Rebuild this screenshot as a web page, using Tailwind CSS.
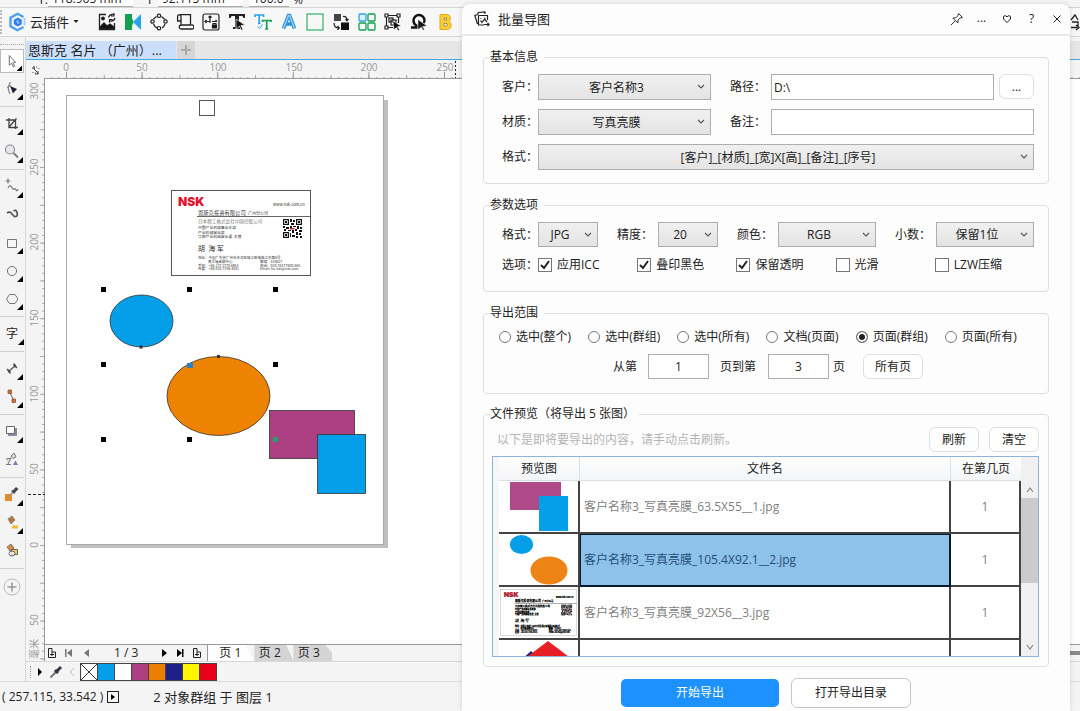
<!DOCTYPE html>
<html lang="zh-CN">
<head>
<meta charset="utf-8">
<title>批量导图</title>
<script src="https://cdn.jsdelivr.net/npm/@tailwindcss/browser@4"></script>
</head>
<body class="h-screen overflow-hidden bg-[#f4f4f4] font-['Open_Sans','Noto_Sans_CJK_SC',sans-serif] text-xs text-[#222]">

<svg class="hidden" aria-hidden="true">
  <symbol id="chev" viewBox="0 0 8 6"><path d="M1 1l3 3 3-3" fill="none" stroke="#555" stroke-width="1.1"/></symbol>
  <symbol id="card" viewBox="0 0 140 86">
    <rect x=".5" y=".5" width="139" height="85" fill="#fff" stroke="#555"/>
    <text x="7" y="15.500" font-size="12" font-weight="900" fill="#e2142d" font-family="Inter, sans-serif">NSK</text>
    <g fill="#333" font-family="'Noto Sans CJK SC', sans-serif">
      <text x="102" y="16" font-size="4">www.nsk.com.cn</text>
      <text x="27" y="24.500" font-size="5.300">恩斯克投资有限公司</text>
      <text x="77" y="24.500" font-size="4">广州分公司</text>
      <text x="27" y="33" font-size="4.600" fill="#777">日本精工株式会社中国控股公司</text>
      <text x="27" y="39" font-size="3.800">中国产业机械事业本部</text>
      <text x="27" y="43.500" font-size="3.800">产业机械营业部</text>
      <text x="27" y="48" font-size="3.800">华南产业机械营业课&#160; 主管</text>
      <text x="27" y="61" font-size="7">胡&#160; 海 军</text>
      <text x="27" y="69" font-size="3.500">地址：中国广东省广州市天河区珠江新城珠江东路6号</text>
      <text x="37" y="72.800" font-size="3.500">周大福金融中心</text>
      <text x="27" y="76.500" font-size="3.500">手机：+86-137 2770 6953</text>
      <text x="27" y="80.300" font-size="3.500">传真：+86-020-3786 4501</text>
      <text x="89" y="72.800" font-size="3.500">邮编：510627</text>
      <text x="89" y="76.500" font-size="3.500">电话：020-38177800-865</text>
      <text x="89" y="80.300" font-size="3.500">Email: hu-hai@nsk.com</text>
    </g>
    <path d="M26 26.500h114" stroke="#555" stroke-width=".9"/>
    <g transform="translate(112 29)" fill="#111">
      <path d="M0 0h6v6H0zM13 0h6v6h-6zM0 13h6v6H0z"/>
      <path d="M1.200 1.200h3.600v3.600H1.200zM14.200 1.200h3.600v3.600h-3.600zM1.200 14.200h3.600v3.600H1.200z" fill="#fff"/>
      <path d="M2 2h2v2H2zM15 2h2v2h-2zM2 15h2v2H2zM7 0h2v3H7zM10 1h2v2h-2zM8 4h3v2H8zM0 7h2v2H0zM3 8h3v2H3zM7 7h2v3H7zM10 7h3v1h-3zM14 7h2v3h-2zM17 8h2v2h-2zM1 10h2v2H1zM5 11h3v1H5zM9 11h2v3H9zM12 10h2v2h-2zM16 11h3v2h-3zM7 14h1v4H7zM9 16h3v2H9zM13 13h2v3h-2zM16 14h2v2h-2zM13 17h2v2h-2zM17 17h2v2h-2z"/>
      <path d="M7.500 9h4v1.500h-4z" fill="#d22"/>
    </g>
  </symbol>
</svg>

<div class="flex h-full flex-col">
  <!-- property bar, scrolled almost out of view -->
  <div class="flex h-2 shrink-0 items-end overflow-hidden border-b border-[#d4d4d4] bg-[#f5f5f5] pl-[38px] leading-[14px]">
    <span class="w-2">Y:</span>
    <span class="ml-0.5 w-[85px] border-b border-[#aaa] bg-white pl-1">118.965 mm</span>
    <span class="ml-[15px] w-2.5">I</span>
    <span class="w-[85px] border-b border-[#aaa] bg-white pl-1">92.115 mm</span>
    <span class="ml-1.5 w-10 border-b border-[#aaa] bg-white pl-1">100.0</span>
    <span class="ml-1">%</span>
  </div>

  <!-- plugin toolbar -->
  <div class="flex h-[29px] shrink-0 items-center border-b border-[#d8d8d8] bg-[#f7f7f7]">
    <div class="h-6 border-l-2 border-dotted border-[#bbb]"></div>
    <button class="ml-1.5 flex items-center text-[13px] leading-5">
      <svg class="size-5" viewBox="0 0 20 20"><path d="M15.500 5L9.500 1.800 2.500 5.700v8.600l7 3.900 6-3.200" fill="none" stroke="#4aa0f5" stroke-width="2.400"/><path d="M16.500 6v7.500" stroke="#9fd0ff" stroke-width="2"/><path d="M9.800 5.500l4 2.300v4.500l-4 2.300-4-2.300V7.800z" fill="#2f7fe8"/><path d="M9.800 8v4M8 9l3.600 2" stroke="#9fd0ff"/></svg>
      <span class="ml-0.5">云插件</span>
      <svg class="ml-1 size-2" viewBox="0 0 8 8"><path d="M.5 2h5L3 5z" fill="#222"/></svg>
    </button>
    <div class="ml-[17px] flex gap-2">
      <button aria-label="图片"><svg class="size-[18px]" viewBox="0 0 18 18" fill="none" stroke="#222" stroke-width="1.300"><path d="M8 1.500H1.500v15h15V10"/><path d="M2 16v-2l4-4 3 3 3-2 4 3v2z" fill="#111"/><circle cx="5" cy="5.500" r="1.300" fill="#111"/><path d="M10.500 4.500q1-3.500 5-3M16 0v3h-3M17 5q-1 3.500-5 3M11.500 9.500v-3h3" stroke-width="1.200"/></svg></button>
      <button aria-label="镜像"><svg class="size-[18px]" viewBox="0 0 18 18"><path d="M1 1h7v16H1z" fill="#12a150"/><path d="M8 5v8l1.500-4z" fill="#12a150"/><path d="M17 1v16L9 9z" fill="#2aa3ef"/></svg></button>
      <button aria-label="节点"><svg class="size-[18px]" viewBox="0 0 18 18" fill="none" stroke="#222" stroke-width="1.200"><path d="M6.500 3.500L3.500 6M11.500 3.500L15 6.500M3.500 11q1 3 3.500 4M15 11q-1 3-3 4"/><circle cx="9" cy="2.800" r="1.700"/><circle cx="2.500" cy="8.500" r="1.700"/><circle cx="15.500" cy="8.500" r="1.700"/><circle cx="9" cy="15.200" r="1.700"/></svg></button>
      <button aria-label="卷轴"><svg class="size-[18px]" viewBox="0 0 18 18" fill="none" stroke="#222" stroke-width="1.300"><path d="M5 12V3.500a1.700 1.700 0 00-3.400 0V8H5M3.500 1.700h11V12M5 12h10a2 2 0 011.500 4H5.500a2 2 0 01-.5-4"/></svg></button>
      <button aria-label="锁定"><svg class="size-[18px]" viewBox="0 0 18 18" fill="none" stroke="#222" stroke-width="1.200"><rect x="1" y="1" width="16" height="16" rx="2"/><path d="M8 3v7M6.500 4.500L8 3l1.500 1.500M3 8.500h5M4.500 7L3 8.500 4.500 10M10 8.500h5M13.500 7L15 8.500"/><path d="M10.500 12h4v3h-4z" fill="#111"/><path d="M11 12v-1.500h3V12"/></svg></button>
      <button aria-label="文字选择"><svg class="size-[18px]" viewBox="0 0 18 18"><path d="M1 1h16v4h-1.500q0-2-2-2H11v11h2v2H5v-2h2V3H4.500q-2 0-2 2H1z" fill="#222"/><path d="M8 6l9 6-4 .5 2 4-1.500.8-2-4L8 16z" fill="#111" stroke="#f7f7f7" stroke-width=".7"/></svg></button>
      <button aria-label="文字转换"><svg class="size-[18px]" viewBox="0 0 18 18" fill="none" stroke-width="1.700"><path d="M1 4V2h8.500v2M5.200 2v8.500M4 10.500h2.500" stroke="#2aa3ef"/><path d="M8.500 9V7.500H17V9M12.700 7.500V16M11.200 16h3" stroke="#12a150"/><path d="M3.500 13.500l2 2 3-4" stroke="#2aa3ef" stroke-width="1"/></svg></button>
      <button aria-label="字体"><svg class="size-[18px]" viewBox="0 0 18 18"><path d="M3.500 15.500L8.500 2.500h1l5 13M6 11h6" fill="none" stroke="#2d8fd8" stroke-width="3.600"/><path d="M3.500 15.500L8.500 2.500h1l5 13" fill="none" stroke="#8dd0f8" stroke-width="1.500"/></svg></button>
      <button aria-label="矩形"><svg class="size-[18px]" viewBox="0 0 18 18"><rect x="1" y="1" width="16" height="16" fill="none" stroke="#2db26a" stroke-width="1.200"/></svg></button>
      <button aria-label="替换"><svg class="size-[18px]" viewBox="0 0 18 18"><path d="M2 1h7v7H2z" fill="#444"/><path d="M9 9.500h8V17H9z" fill="#111"/><path d="M11 3.500q4-.5 4 4M13.500 6L15 7.800 16.500 6M2 10q0 5 5 5M5.500 13l1.800 2-1.800 1.700" fill="none" stroke="#222" stroke-width="1.200"/></svg></button>
      <button aria-label="排列"><svg class="size-[18px]" viewBox="0 0 18 18" fill="none" stroke-width="1.300"><rect x="1" y="1" width="7" height="7" rx="1" stroke="#2aa3ef" fill="#dff1ff"/><g stroke="#12a150"><rect x="10" y="1" width="7" height="7" rx="1"/><rect x="1" y="10" width="7" height="7" rx="1"/><rect x="10" y="10" width="7" height="7" rx="1"/></g></svg></button>
      <button aria-label="群组"><svg class="size-[18px]" viewBox="0 0 18 18" fill="none" stroke="#222" stroke-width="1.200"><path d="M3 2.500h11M3 14.500h6M2.500 3v11M14.500 3v7"/><path d="M1 1h3v3H1zM13 1h3v3h-3zM1 13h3v3H1z" fill="#f7f7f7"/><rect x="5" y="5" width="4" height="4"/><rect x="7" y="7" width="5" height="5"/><path d="M9 8l8 5-3.500.8 2 3-1.200.8-2-3L10 17z" fill="#111" stroke="#f7f7f7" stroke-width=".5"/></svg></button>
      <button aria-label="曲线选择"><svg class="size-[18px]" viewBox="0 0 18 18"><path d="M1 14.500h5.500v-2Q3.500 11 3.500 7.500A5.500 5.500 0 0114.500 7.500Q14.500 9 13.500 10" fill="none" stroke="#111" stroke-width="2.400"/><path d="M8 6.500l9 6.500-4.500.5 2 3-1.200.7-2-3L8 16.500z" fill="#111" stroke="#f7f7f7" stroke-width=".5"/></svg></button>
      <button aria-label="加粗"><svg class="size-[18px]" viewBox="0 0 18 18"><path d="M4 1.500h6q4.500 0 4.500 3.800 0 2-1.600 3 2.300 1 2.300 3.900 0 4.300-5 4.300H4z" fill="#fbcf30" stroke="#e0a81c"/><path d="M8 5h2.500v2H8zM8 10.500h3v2.500H8z" fill="#f7f7f7" stroke="#8a7a5a" stroke-width=".8"/></svg></button>
    </div>
    <button class="ml-auto" aria-label="导出"><svg class="size-[18px]" viewBox="0 0 18 18"><path d="M9 7l4-5 3 5M10 9h6v6M9 14.500h6M14 12l3 2.500-3 2.500" fill="none" stroke="#222" stroke-width="1.300"/></svg></button>
  </div>

  <div class="flex min-h-0 flex-1">
    <!-- toolbox -->
    <div class="flex w-[26px] shrink-0 flex-col items-start border-r border-[#d8d8d8] pt-[7px]">
      <div class="mb-0.5 w-6 border-t border-dotted border-[#aaa]"></div>
      <button aria-label="选择" class="grid h-7 w-6 shrink-0 place-items-center"><svg class="h-6 w-6 border border-[#bbb] bg-white" viewBox="0 0 24 24"><path d="M9 6v10.500l2.500-2 2 4 1.500-.8-2-3.700 3-.5z" fill="#fff" stroke="#666"/><path d="M23 17v6h-6z" fill="#000"/></svg></button>
      <button aria-label="形状" class="grid h-7 w-6 shrink-0 place-items-center"><svg class="h-6 w-6" viewBox="0 0 24 24"><path d="M10.500 5q-4 6-.5 12M7 10.500l4-2" fill="none" stroke="#888" stroke-width="1.300"/><path d="M10 9l7 3-4 4.500z" fill="#223"/><path d="M23 17v6h-6z" fill="#000"/></svg></button>
      <hr class="my-[3px] w-6 border-[#d0d0d0]">
      <button aria-label="裁剪" class="grid h-7 w-6 shrink-0 place-items-center"><svg class="h-6 w-6" viewBox="0 0 24 24"><path d="M6 8h9.500v9M9 6v9.500h9M8.500 15.500l8-9" fill="none" stroke="#444" stroke-width="1.300"/><path d="M23 17v6h-6z" fill="#000"/></svg></button>
      <button aria-label="缩放" class="grid h-7 w-6 shrink-0 place-items-center"><svg class="h-6 w-6" viewBox="0 0 24 24"><circle cx="10" cy="9.500" r="4.500" fill="#e4e8ec" stroke="#888" stroke-width="1.100"/><path d="M13.500 13l4.500 4.500" stroke="#777" stroke-width="1.800"/><path d="M23 17v6h-6z" fill="#000"/></svg></button>
      <hr class="my-[3px] w-6 border-[#d0d0d0]">
      <button aria-label="手绘" class="grid h-7 w-6 shrink-0 place-items-center"><svg class="h-6 w-6" viewBox="0 0 24 24"><path d="M8 3.500v5M5.500 6h5M8 13q2-4 3.500-1t2.500 2 2 1 2-1" fill="none" stroke="#777" stroke-width="1.200"/><path d="M23 17v6h-6z" fill="#000"/></svg></button>
      <button aria-label="艺术笔" class="grid h-7 w-6 shrink-0 place-items-center"><svg class="h-6 w-6" viewBox="0 0 24 24"><path d="M7 10q3-2 5 1t4 2.500 1-4-3.500-1.500" fill="none" stroke="#555" stroke-width="1.700"/></svg></button>
      <button aria-label="矩形工具" class="grid h-7 w-6 shrink-0 place-items-center"><svg class="h-6 w-6" viewBox="0 0 24 24"><path d="M7.500 8.500h9v8h-9z" fill="#f4f6f8" stroke="#777"/><path d="M23 17v6h-6z" fill="#000"/></svg></button>
      <button aria-label="椭圆工具" class="grid h-7 w-6 shrink-0 place-items-center"><svg class="h-6 w-6" viewBox="0 0 24 24"><circle cx="12" cy="12" r="4.600" fill="#f0f2f4" stroke="#777"/><path d="M23 17v6h-6z" fill="#000"/></svg></button>
      <button aria-label="多边形" class="grid h-7 w-6 shrink-0 place-items-center"><svg class="h-6 w-6" viewBox="0 0 24 24"><path d="M6.500 12l3-4.500h5.500l3 4.500-3 4.500H9.500z" fill="#f0f2f4" stroke="#777"/><path d="M23 17v6h-6z" fill="#000"/></svg></button>
      <hr class="my-[3px] w-6 border-[#d0d0d0]">
      <button class="flex h-7 w-6 shrink-0 items-center justify-end text-xs leading-none" aria-label="文本">字<svg class="mt-4 size-1.5" viewBox="0 0 6 6"><path d="M6 0v6H0z"/></svg></button>
      <hr class="my-[3px] w-6 border-[#d0d0d0]">
      <button aria-label="度量" class="grid h-7 w-6 shrink-0 place-items-center"><svg class="h-6 w-6" viewBox="0 0 24 24"><path d="M8.500 14.500l7-6M7 12l3.500 4.500M13.500 6.500l3.500 4.500" stroke="#555" stroke-width="1.300"/><path d="M8 15.500l.5-3.500 2.500 3zM16 7.500l-.5 3.500-2.500-3z" fill="#444"/><path d="M23 17v6h-6z" fill="#000"/></svg></button>
      <button aria-label="连接器" class="grid h-7 w-6 shrink-0 place-items-center"><svg class="h-6 w-6" viewBox="0 0 24 24"><path d="M9.500 7l4 8" stroke="#666"/><path d="M8 5h3.500v3.500H8zM12 14h3.500v3.500H12z" fill="#d0733a" stroke="#8a4a22" stroke-width=".7"/><path d="M23 17v6h-6z" fill="#000"/></svg></button>
      <hr class="my-[3px] w-6 border-[#d0d0d0]">
      <button aria-label="阴影" class="grid h-7 w-6 shrink-0 place-items-center"><svg class="h-6 w-6" viewBox="0 0 24 24"><path d="M8 8h9v8H8z" fill="#8a8aa8"/><path d="M6.500 6.500h8v7h-8z" fill="#fff" stroke="#666"/><path d="M23 17v6h-6z" fill="#000"/></svg></button>
      <button aria-label="透明度" class="grid h-7 w-6 shrink-0 place-items-center"><svg class="h-6 w-6" viewBox="0 0 24 24"><path d="M11 8l3-3 2 4-3 1.500zM6 11l5-1-3 6M6 16.500h5" fill="#ddd" stroke="#777"/><path d="M13 17l2.500-4.500L18 17z" fill="#7678b8"/></svg></button>
      <hr class="my-[3px] w-6 border-[#d0d0d0]">
      <button aria-label="滴管" class="grid h-7 w-6 shrink-0 place-items-center"><svg class="h-6 w-6" viewBox="0 0 24 24"><path d="M5 11h7v7H5z" fill="#ef8a1b"/><path d="M8 15l5-6" stroke="#999" stroke-width="1.800"/><path d="M11 8l2-1 3-3 2.500 2-3 3-1 2z" fill="#445"/><path d="M23 17v6h-6z" fill="#000"/></svg></button>
      <button aria-label="填充" class="grid h-7 w-6 shrink-0 place-items-center"><svg class="h-6 w-6" viewBox="0 0 24 24"><path d="M8 8l4-3 3 4-4 4z" fill="#b9773a" stroke="#888"/><path d="M11.500 17.500l2-4 2 1.500 2-1 .5 3.500z" fill="#f7b52a"/><path d="M23 17v6h-6z" fill="#000"/></svg></button>
      <button aria-label="智能填充" class="grid h-7 w-6 shrink-0 place-items-center"><svg class="h-6 w-6" viewBox="0 0 24 24"><path d="M7 8l4-3 3 4-4 3z" fill="#d98a3a" stroke="#777"/><path d="M11.500 10.500h6v5h-6z" fill="#f5c66a" stroke="#666"/><ellipse cx="12" cy="14.500" rx="3" ry="2.500" fill="#fff" fill-opacity=".7" stroke="#666"/></svg></button>
      <hr class="my-[3px] w-6 border-[#d0d0d0]">
      <button aria-label="添加工具" class="mt-px grid h-7 w-6 shrink-0 place-items-center"><svg class="h-5 w-5" viewBox="0 0 20 20"><circle cx="10" cy="10" r="8" fill="none" stroke="#bbb"/><path d="M10 5.500v9M5.500 10h9" stroke="#999" stroke-width="1.600"/></svg></button>
    </div>

    <div class="flex min-w-0 flex-1 flex-col">
      <!-- document tabs -->
      <div class="mt-1 flex h-[19px] shrink-0 gap-px border-b border-[#3fa9e0] bg-[#e6e6e6]">
        <button class="w-[150px] bg-[#cbdffb] pl-0.5 text-left text-[13px] leading-[17px] whitespace-nowrap">恩斯克 名片 （广州）...</button>
        <button class="grid w-[18px] place-items-center bg-[#d6d6d6]" aria-label="新建"><svg class="size-3" viewBox="0 0 12 12"><path d="M6 1v10M1 6h10" stroke="#aaa" stroke-width="2"/></svg></button>
      </div>
      <!-- horizontal ruler, 50 units = 75.6 px -->
      <svg class="h-[19px] w-full shrink-0" font-size="10" fill="#999">
        <defs>
          <pattern id="hs" width="7.560" height="3" patternUnits="userSpaceOnUse" x="40" y="16"><path d="M.5 1v2" stroke="#aaa"/></pattern>
          <pattern id="hm" width="37.800" height="5" patternUnits="userSpaceOnUse" x="40" y="14"><path d="M.5 1v4" stroke="#aaa"/></pattern>
          <pattern id="hl" width="75.600" height="7" patternUnits="userSpaceOnUse" x="40" y="12"><path d="M.5 0v7" stroke="#999"/></pattern>
        </defs>
        <rect x="19" y="16" width="100%" height="2" fill="url(#hs)"/><rect x="19" y="14" width="100%" height="4" fill="url(#hm)"/><rect x="19" y="12" width="100%" height="6" fill="url(#hl)"/>
        <path d="M18 18.500h2000" stroke="#999"/>
        <g text-anchor="middle"><text x="40" y="11">0</text><text x="116" y="11">50</text><text x="192" y="11">100</text><text x="268" y="11">150</text><text x="343" y="11">200</text><text x="419" y="11">250</text></g>
        <path d="M429.500 1v17" stroke="#222" stroke-dasharray="2 2"/>
        <path d="M6 8h3M8 6v3M8 9l5 5M13 8v1M7 12v1M12 11v3H9M10 7h1M9 13h1" stroke="#444" fill="none"/>
      </svg>
      <div class="flex min-h-0 flex-1">
        <!-- vertical ruler -->
        <svg class="h-full w-[19px] shrink-0" font-size="10" fill="#999">
          <defs>
            <pattern id="vs" width="3" height="7.560" patternUnits="userSpaceOnUse" x="15" y="12.400"><path d="M1 .5h2" stroke="#aaa"/></pattern>
            <pattern id="vm" width="5" height="37.800" patternUnits="userSpaceOnUse" x="13" y="12.400"><path d="M1 .5h4" stroke="#aaa"/></pattern>
          </defs>
          <rect x="15" width="3" height="100%" fill="url(#vs)"/><rect x="13" width="5" height="100%" fill="url(#vm)"/>
          <path d="M18.500 0v2000" stroke="#999"/>
          <g text-anchor="middle">
            <text transform="translate(12 12) rotate(-90)">300</text><text transform="translate(12 88) rotate(-90)">250</text><text transform="translate(12 163) rotate(-90)">200</text><text transform="translate(12 239) rotate(-90)">150</text><text transform="translate(12 315) rotate(-90)">100</text><text transform="translate(12 390) rotate(-90)">50</text><text transform="translate(12 466) rotate(-90)">0</text><text transform="translate(12 541) rotate(-90)">50</text><text transform="translate(12 570) rotate(-90)" font-family="'Noto Sans CJK SC', sans-serif">毫米</text>
          </g>
          <path d="M2 415.500h17" stroke="#222" stroke-dasharray="3 2"/>
        </svg>
        <div class="flex min-w-0 flex-1 flex-col">
          <!-- drawing canvas -->
          <svg class="min-h-0 w-full flex-1 bg-white">
            <g transform="translate(-45 -79)" stroke-width="1">
              <path d="M71 545h313V100h4v448H71z" fill="#bfbfbf"/>
              <rect x="66.500" y="95.500" width="317" height="449" fill="#fff" stroke="#aaa"/>
              <rect x="199.500" y="100.500" width="15" height="15" fill="#fff" stroke="#555"/>
              <use href="#card" x="171" y="190" width="140" height="86"/>
              <g stroke="#333" stroke-width=".8">
                <ellipse cx="141.500" cy="321" rx="31.500" ry="26" fill="#049fe8"/>
                <ellipse cx="218.500" cy="396" rx="51.500" ry="39.500" fill="#ee8302"/>
                <rect x="269.500" y="410.500" width="85" height="48" fill="#ad4082"/>
                <rect x="317.500" y="434.500" width="48" height="59" fill="#049fe8"/>
              </g>
              <path d="M101 287h5v5h-5zM187 287h5v5h-5zM273 287h5v5h-5zM101 362h5v5h-5zM273 362h5v5h-5zM101 437h5v5h-5zM187 437h5v5h-5z" fill="#000"/>
              <path d="M187 363h6v5h-6z" fill="#2d7fc8"/><path d="M273 437h5v5h-5z" fill="#26a06a"/>
              <path d="M139.500 345.500h3v3h-3zM217 355h3v3h-3z" fill="#333"/>
            </g>
          </svg>
          <!-- page navigator -->
          <div class="flex h-[17px] shrink-0 items-center border-t border-[#999] text-xs leading-4">
            <button class="ml-px" aria-label="前插页"><svg class="size-3" viewBox="0 0 12 12"><path d="M6 1.500H2.500v9h7V5M6 1.500V5h3.500M6 5v4M4 7.500h4" fill="none" stroke="#222"/></svg></button>
            <button class="ml-[7px]" aria-label="首页"><svg class="size-2" viewBox="0 0 8 8" fill="#777"><path d="M0 0h1.500v8H0zM7 0v8L2 4z"/></svg></button>
            <button class="ml-2.5" aria-label="上一页"><svg class="size-2" viewBox="0 0 8 8" fill="#777"><path d="M6 0v8L1 4z"/></svg></button>
            <span class="ml-[23px]">1 / 3</span>
            <button class="ml-[22px]" aria-label="下一页"><svg class="size-2" viewBox="0 0 8 8"><path d="M2 0v8l5-4z"/></svg></button>
            <button class="ml-2" aria-label="末页"><svg class="size-2" viewBox="0 0 8 8"><path d="M1 0v8l5-4zM6 0h1.500v8H6z"/></svg></button>
            <button class="ml-[7px]" aria-label="后插页"><svg class="size-3" viewBox="0 0 12 12"><path d="M6 1.500H2.500v9h7V5M6 1.500V5h3.500M6 5v4M4 7.500h4" fill="none" stroke="#222"/></svg></button>
            <div class="ml-1 flex h-4 border-l border-[#999]">
              <button class="w-[46px] bg-white pr-0.5 [clip-path:polygon(0_0,80%_0,100%_100%,0_100%)]">页 1</button>
              <button class="w-[39px] bg-[#d4d4d4] pr-2 [clip-path:polygon(0_0,82%_0,100%_100%,0_100%)]">页 2</button>
              <button class="w-[39px] bg-[#d4d4d4] pr-2 [clip-path:polygon(0_0,82%_0,100%_50%,100%_100%,0_100%)]">页 3</button>
            </div>
            <div class="ml-auto h-1 w-3 bg-[#888]"></div>
          </div>
        </div>
      </div>
      <!-- colour palette -->
      <div class="flex h-[20px] shrink-0 items-center border-t border-[#d8d8d8]">
        <div class="ml-1 h-3 border-l border-dotted border-[#999]"></div>
        <svg class="ml-1.5 size-2" viewBox="0 0 8 8"><path d="M1 0v8l4-4z"/></svg>
        <svg class="ml-[3px] size-4" viewBox="0 0 16 16"><path d="M2.500 13.500l6-6" stroke="#777" stroke-width="2"/><path d="M7 6l3 3M9 7l4-4" stroke="#334" stroke-width="3"/></svg>
        <svg class="ml-1 size-2" viewBox="0 0 8 8"><path d="M6 0L2 4l4 4" fill="none" stroke="#bbb"/></svg>
        <div class="ml-1 flex divide-x divide-[#444] border border-[#444]">
          <button aria-label="无色" class="h-4 w-[17px] bg-white"><svg class="size-4" viewBox="0 0 16 16"><path d="M0 0l16 16M16 0L0 16" stroke="#333"/></svg></button>
          <button aria-label="青" class="h-4 w-[17px] bg-[#049fe8]"></button>
          <button aria-label="白" class="h-4 w-[17px] bg-white"></button>
          <button aria-label="紫" class="h-4 w-[17px] bg-[#ad4082]"></button>
          <button aria-label="橙" class="h-4 w-[17px] bg-[#ea7f04]"></button>
          <button aria-label="蓝" class="h-4 w-[17px] bg-[#1f2087]"></button>
          <button aria-label="黄" class="h-4 w-[17px] bg-[#fff500]"></button>
          <button aria-label="红" class="h-4 w-4 bg-[#e60019]"></button>
        </div>
      </div>
    </div>
  </div>

  <!-- status bar -->
  <div class="flex h-[30px] shrink-0 items-center border-t border-[#dcdcdc] bg-[#f4f4f4] pl-0.5 leading-5">
    <span>( 257.115, 33.542 )</span>
    <svg class="ml-1 size-3" viewBox="0 0 12 12"><rect x=".5" y=".5" width="11" height="11" fill="none" stroke="#222"/><path d="M4 3v6l4-3z"/></svg>
    <span class="ml-[34px] text-[13px]">2 对象群组 于 图层 1</span>
  </div>
</div>

<!-- export dialog -->
<main class="absolute top-1 right-[10px] bottom-0 flex w-[608px] flex-col rounded-t-lg bg-[#fdfdfd] shadow-[0_0_5px_rgba(0,0,0,0.15)]">
  <header class="flex h-8 shrink-0 items-center border-b-2 border-[#e8e8e8] pr-px pl-3">
    <svg class="size-4" viewBox="0 0 16 16" fill="none" stroke="#222" stroke-width="1.200"><path d="M3.500 13L.8 4.500 4 3.500M3.500 4l.8-2.500L11 1v2M4.500 4.500h9V9M4.500 4.500v9.500H10"/><path d="M6.500 9.500l1.500 2 2.500-3.500 2.500 3M7 7v.8M11 6.500v.8M10 13.500h5M13.500 12l1.500 1.500-1.500 1.500"/></svg>
    <h1 class="ml-2 text-[13px] leading-5">批量导图</h1>
    <div class="ml-auto flex">
      <button class="grid h-7 w-[25px] place-items-center" aria-label="置顶"><svg class="size-3.5" viewBox="0 0 14 14" fill="none" stroke="#333"><path d="M8.500 1.500l4 4-2.500.5-2 2-.2 3-5-5 3-.2 2-2zM5 9l-4 4"/></svg></button>
      <button class="w-[25px] pb-0.5">...</button>
      <button class="grid h-7 w-[25px] place-items-center" aria-label="收藏"><svg class="size-2.5" viewBox="0 0 10 10"><path d="M5 8.500L1.500 5V2.500Q3 .5 5 2.800 7 .5 8.500 2.500V5z" fill="none" stroke="#222"/></svg></button>
      <button class="w-[25px]">?</button>
      <button class="grid h-7 w-[25px] place-items-center" aria-label="关闭"><svg class="size-2.5" viewBox="0 0 10 10"><path d="M1.500 1.500l7 7M8.500 1.500l-7 7" stroke="#222"/></svg></button>
    </div>
  </header>

  <form class="flex flex-col px-[21px] pt-[11px] leading-5">
    <fieldset class="rounded border border-[#d9e0e0] pt-[7px] pr-3.5 pb-[13px] pl-[18px]">
      <legend class="-ml-3 pr-1.5">基本信息</legend>
      <div class="grid grid-cols-[36px_173px_59px_1fr] items-center gap-y-[9px]">
        <label for="cust" class="whitespace-nowrap">客户：</label>
        <div class="relative"><select id="cust" class="block h-[26px] w-full appearance-none border border-[#aeaeae] bg-linear-to-b from-[#f0f0f0] to-[#e4e4e4] pt-0.5 pr-4 text-center"><option>客户名称3</option></select><svg class="pointer-events-none absolute top-2.5 right-1.5 h-1.5 w-2"><use href="#chev"/></svg></div>
        <label for="path" class="ml-[19px] whitespace-nowrap">路径：</label>
        <div class="flex gap-[5px] pl-px"><input id="path" value="D:\" class="h-[26px] min-w-0 flex-1 border border-[#aeaeae] bg-white px-0.5"><button type="button" class="h-[25px] w-[35px] rounded-md border border-[#dfdfdf] bg-white">...</button></div>
        <label for="mat" class="whitespace-nowrap">材质：</label>
        <div class="relative"><select id="mat" class="block h-[26px] w-full appearance-none border border-[#aeaeae] bg-linear-to-b from-[#f0f0f0] to-[#e4e4e4] pt-0.5 pr-4 text-center"><option>写真亮膜</option></select><svg class="pointer-events-none absolute top-2.5 right-1.5 h-1.5 w-2"><use href="#chev"/></svg></div>
        <label for="note" class="ml-[19px] whitespace-nowrap">备注：</label>
        <div class="flex pl-px"><input id="note" class="h-[26px] min-w-0 flex-1 border border-[#aeaeae] bg-white px-0.5"></div>
        <label for="pat" class="whitespace-nowrap">格式：</label>
        <div class="relative col-span-3"><select id="pat" class="block h-[26px] w-full appearance-none border border-[#aeaeae] bg-linear-to-b from-[#f0f0f0] to-[#e4e4e4] pt-0.5 pr-4 text-center"><option>[客户]_[材质]_[宽]X[高]_[备注]_[序号]</option></select><svg class="pointer-events-none absolute top-2.5 right-1.5 h-1.5 w-2"><use href="#chev"/></svg></div>
      </div>
    </fieldset>

    <fieldset class="mt-[11px] rounded border border-[#d9e0e0] pt-[7px] pr-3.5 pb-4 pl-[18px]">
      <legend class="-ml-3 pr-1.5">参数选项</legend>
      <div class="flex items-center whitespace-nowrap">
        <label for="fmt" class="w-9">格式：</label>
        <div class="relative w-[60px]"><select id="fmt" class="block h-[25px] w-full appearance-none border border-[#aeaeae] bg-linear-to-b from-[#f0f0f0] to-[#e4e4e4] pr-4 text-center"><option>JPG</option></select><svg class="pointer-events-none absolute top-2.5 right-1.5 h-1.5 w-2"><use href="#chev"/></svg></div>
        <label for="dpi" class="ml-[19px] w-[41px]">精度：</label>
        <div class="relative w-[60px]"><select id="dpi" class="block h-[25px] w-full appearance-none border border-[#aeaeae] bg-linear-to-b from-[#f0f0f0] to-[#e4e4e4] pr-4 text-center"><option>20</option></select><svg class="pointer-events-none absolute top-2.5 right-1.5 h-1.5 w-2"><use href="#chev"/></svg></div>
        <label for="col" class="ml-[19px] w-[41px]">颜色：</label>
        <div class="relative flex-1"><select id="col" class="block h-[25px] w-full appearance-none border border-[#aeaeae] bg-linear-to-b from-[#f0f0f0] to-[#e4e4e4] pr-4 text-center"><option>RGB</option></select><svg class="pointer-events-none absolute top-2.5 right-1.5 h-1.5 w-2"><use href="#chev"/></svg></div>
        <label for="dec" class="ml-[19px] w-[41px]">小数：</label>
        <div class="relative flex-1"><select id="dec" class="block h-[25px] w-full appearance-none border border-[#aeaeae] bg-linear-to-b from-[#f0f0f0] to-[#e4e4e4] pr-4 text-center"><option>保留1位</option></select><svg class="pointer-events-none absolute top-2.5 right-1.5 h-1.5 w-2"><use href="#chev"/></svg></div>
      </div>
      <div class="mt-2 flex items-center whitespace-nowrap">
        <span class="w-9">选项：</span>
        <div class="grid flex-1 grid-cols-5">
          <label class="flex items-center gap-[5px]"><input type="checkbox" checked class="size-3.5 appearance-none border border-[#777] bg-white checked:bg-[url('data:image/svg+xml,%3Csvg%20xmlns=%22http://www.w3.org/2000/svg%22%20viewBox=%220%200%2012%2012%22%3E%3Cpath%20d=%22M2%206l3%203%205-7%22%20fill=%22none%22%20stroke=%22%23222%22%20stroke-width=%222%22/%3E%3C/svg%3E')]">应用ICC</label>
          <label class="flex items-center gap-[5px]"><input type="checkbox" checked class="size-3.5 appearance-none border border-[#777] bg-white checked:bg-[url('data:image/svg+xml,%3Csvg%20xmlns=%22http://www.w3.org/2000/svg%22%20viewBox=%220%200%2012%2012%22%3E%3Cpath%20d=%22M2%206l3%203%205-7%22%20fill=%22none%22%20stroke=%22%23222%22%20stroke-width=%222%22/%3E%3C/svg%3E')]">叠印黑色</label>
          <label class="flex items-center gap-[5px]"><input type="checkbox" checked class="size-3.5 appearance-none border border-[#777] bg-white checked:bg-[url('data:image/svg+xml,%3Csvg%20xmlns=%22http://www.w3.org/2000/svg%22%20viewBox=%220%200%2012%2012%22%3E%3Cpath%20d=%22M2%206l3%203%205-7%22%20fill=%22none%22%20stroke=%22%23222%22%20stroke-width=%222%22/%3E%3C/svg%3E')]">保留透明</label>
          <label class="flex items-center gap-[5px]"><input type="checkbox" class="size-3.5 appearance-none border border-[#777] bg-white">光滑</label>
          <label class="flex items-center gap-[5px]"><input type="checkbox" class="size-3.5 appearance-none border border-[#777] bg-white">LZW压缩</label>
        </div>
      </div>
    </fieldset>

    <fieldset class="mt-[11px] rounded border border-[#d9e0e0] pt-1 pr-3.5 pb-3.5 pl-[15px]">
      <legend class="-ml-[9px] pr-1.5">导出范围</legend>
      <div class="grid grid-cols-6 whitespace-nowrap">
        <label class="flex items-center gap-[5px]"><input type="radio" name="range" class="size-3 appearance-none rounded-full border border-[#777] bg-white checked:bg-[#222] checked:shadow-[inset_0_0_0_2px_#fff]">选中(整个)</label>
        <label class="flex items-center gap-[5px]"><input type="radio" name="range" class="size-3 appearance-none rounded-full border border-[#777] bg-white checked:bg-[#222] checked:shadow-[inset_0_0_0_2px_#fff]">选中(群组)</label>
        <label class="flex items-center gap-[5px]"><input type="radio" name="range" class="size-3 appearance-none rounded-full border border-[#777] bg-white checked:bg-[#222] checked:shadow-[inset_0_0_0_2px_#fff]">选中(所有)</label>
        <label class="flex items-center gap-[5px]"><input type="radio" name="range" class="size-3 appearance-none rounded-full border border-[#777] bg-white checked:bg-[#222] checked:shadow-[inset_0_0_0_2px_#fff]">文档(页面)</label>
        <label class="flex items-center gap-[5px]"><input type="radio" name="range" checked class="size-3 appearance-none rounded-full border border-[#777] bg-white checked:bg-[#222] checked:shadow-[inset_0_0_0_2px_#fff]">页面(群组)</label>
        <label class="flex items-center gap-[5px]"><input type="radio" name="range" class="size-3 appearance-none rounded-full border border-[#777] bg-white checked:bg-[#222] checked:shadow-[inset_0_0_0_2px_#fff]">页面(所有)</label>
      </div>
      <div class="mt-[7px] flex items-center pl-[114px]">
        <label for="from">从第</label>
        <input id="from" value="1" class="ml-[11px] h-[25px] w-[61px] border border-[#aeaeae] bg-white text-center">
        <label for="to" class="ml-[11px]">页到第</label>
        <input id="to" value="3" class="ml-3 h-[25px] w-[61px] border border-[#aeaeae] bg-white text-center">
        <span class="ml-1">页</span>
        <button type="button" class="ml-[18px] h-[25px] w-[60px] rounded-md border border-[#dfdfdf] bg-white">所有页</button>
      </div>
    </fieldset>

    <fieldset class="mt-2.5 min-w-0 rounded border border-[#d9e0e0] pt-[3px] pr-[9px] pb-[9px] pl-2">
      <legend class="-ml-0.5 pr-1">文件预览（将导出 5 张图）</legend>
      <div class="flex items-center gap-2.5 pl-[5px]">
        <p class="mr-auto text-[#b4b4b4]">以下是即将要导出的内容，请手动点击刷新。</p>
        <button type="button" class="h-[25px] w-[50px] rounded-md border border-[#dfdfdf] bg-white">刷新</button>
        <button type="button" class="h-[25px] w-[50px] rounded-md border border-[#dfdfdf] bg-white">清空</button>
      </div>
      <div class="mt-1 flex h-[201px] overflow-hidden border border-[#8fb4d8] bg-[#f0f0f0]">
        <div class="w-1.5 shrink-0 bg-[#f6f6f6]"></div>
        <table class="flex-1 table-fixed border-separate border-spacing-0 bg-white">
          <colgroup><col class="w-[81px]"><col><col class="w-[70px]"></colgroup>
          <thead>
            <tr class="h-6 bg-linear-to-b from-white to-[#f2f4f6]">
              <th class="border-r border-b border-[#dcdfe3] p-0 font-normal">预览图</th>
              <th class="border-r border-b border-[#dcdfe3] p-0 font-normal">文件名</th>
              <th class="border-b border-[#dcdfe3] p-0 font-normal">在第几页</th>
            </tr>
          </thead>
          <tbody class="text-[#808080]">
            <tr class="h-[53px]">
              <td class="border-r-2 border-b-2 border-[#444] p-0"><svg class="h-[51px] w-[79px]" viewBox="0 0 79 51"><path d="M11 1h51v28H11z" fill="#ad4a87"/><path d="M40 15h29v35H40z" fill="#049fe8"/></svg></td>
              <td class="border-r-2 border-b-2 border-[#444] py-0 pr-0 pl-1">客户名称3_写真亮膜_63.5X55__1.jpg</td>
              <td class="border-r-2 border-b-2 border-[#444] p-0 text-center">1</td>
            </tr>
            <tr class="h-[53px]">
              <td class="border-r-2 border-b-2 border-[#444] p-0"><svg class="h-[51px] w-[79px]" viewBox="0 0 79 51"><ellipse cx="22.500" cy="10.500" rx="11.500" ry="9.500" fill="#049fe8"/><ellipse cx="50" cy="36.500" rx="18.500" ry="14" fill="#ef8416"/></svg></td>
              <td class="border-r-2 border-b-2 border-[#0b1a2a] bg-[#8fc2eb] py-0 pr-0 pl-1 text-[#1f4e79] shadow-[inset_1px_1px_0_#0b1a2a]">客户名称3_写真亮膜_105.4X92.1__2.jpg</td>
              <td class="border-r-2 border-b-2 border-[#444] p-0 text-center">1</td>
            </tr>
            <tr class="h-[53px]">
              <td class="border-r-2 border-b-2 border-[#444] p-0"><svg class="ml-px h-[51px] w-[77px]" viewBox="0 0 77 51"><use href="#card" y="2" width="77" height="47" stroke="#000" stroke-width=".4"/></svg></td>
              <td class="border-r-2 border-b-2 border-[#444] py-0 pr-0 pl-1">客户名称3_写真亮膜_92X56__3.jpg</td>
              <td class="border-r-2 border-b-2 border-[#444] p-0 text-center">1</td>
            </tr>
            <tr class="h-[53px]">
              <td class="border-r-2 border-b-2 border-[#444] p-0"><svg class="h-[51px] w-[79px]" viewBox="0 0 79 51"><path d="M20 22l12-11 12 11v12H20z" fill="#1f2087"/><path d="M49 1l29 22H20z" fill="#e61f26"/></svg></td>
              <td class="border-r-2 border-b-2 border-[#444] p-0"></td>
              <td class="border-r-2 border-b-2 border-[#444] p-0"></td>
            </tr>
          </tbody>
        </table>
        <div class="flex w-[17px] shrink-0 flex-col items-center pt-6">
          <svg class="h-[17px] w-2 shrink-0" viewBox="0 0 8 17"><path d="M1 11l3-4 3 4" fill="none" stroke="#888" stroke-width="1.200"/></svg>
          <div class="h-[85px] w-full shrink-0 bg-[#cbcbcb]"></div>
          <svg class="mt-auto h-[17px] w-2 shrink-0" viewBox="0 0 8 17"><path d="M1 6l3 4 3-4" fill="none" stroke="#888" stroke-width="1.200"/></svg>
        </div>
      </div>
    </fieldset>

    <div class="mt-[11px] flex items-center justify-center gap-3">
      <button type="button" class="h-7 w-[158px] rounded-[5px] bg-[#1c91ff] text-white">开始导出</button>
      <button type="button" class="h-[30px] w-[120px] rounded-md border border-[#c6c6c6] bg-white">打开导出目录</button>
    </div>
  </form>
</main>
</body>
</html>
